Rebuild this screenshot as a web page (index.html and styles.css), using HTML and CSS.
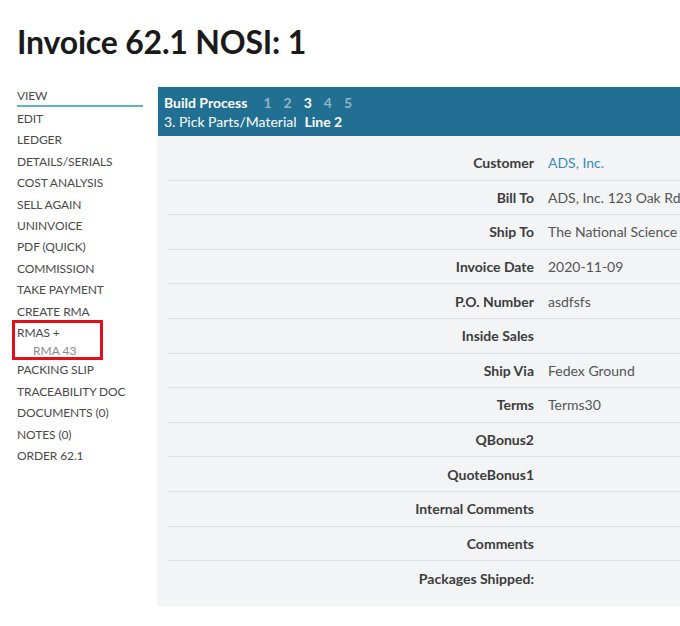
FILE: index.html
```html
<!DOCTYPE html>
<html>
<head>
<meta charset="utf-8">
<link rel="stylesheet" href="styles.css">
</head>
<body>
<div class="page">
  <h1 class="title">Invoice 62.1 NOSI: 1</h1>
  <div class="layout">
    <nav class="sidenav">
      <a class="nav-item active">VIEW</a>
      <a class="nav-item">EDIT</a>
      <a class="nav-item">LEDGER</a>
      <a class="nav-item">DETAILS/SERIALS</a>
      <a class="nav-item">COST ANALYSIS</a>
      <a class="nav-item">SELL AGAIN</a>
      <a class="nav-item">UNINVOICE</a>
      <a class="nav-item">PDF (QUICK)</a>
      <a class="nav-item">COMMISSION</a>
      <a class="nav-item">TAKE PAYMENT</a>
      <a class="nav-item">CREATE RMA</a>
      <div class="nav-group highlighted">
        <a class="nav-item">RMAS +</a>
        <a class="nav-sub">RMA 43</a>
      </div>
      <a class="nav-item">PACKING SLIP</a>
      <a class="nav-item">TRACEABILITY DOC</a>
      <a class="nav-item">DOCUMENTS (0)</a>
      <a class="nav-item">NOTES (0)</a>
      <a class="nav-item">ORDER 62.1</a>
    </nav>
    <section class="panel">
      <header class="panel-head">
        <div class="head-line">
          <span class="head-strong">Build Process</span>
          <span class="steps">
            <span class="step">1</span>
            <span class="step">2</span>
            <span class="step current">3</span>
            <span class="step">4</span>
            <span class="step">5</span>
          </span>
        </div>
        <div class="head-line">
          <span>3. Pick Parts/Material</span>
          <span class="head-strong line-label">Line 2</span>
        </div>
      </header>
      <div class="panel-body">
        <div class="row"><div class="label">Customer</div><div class="value link">ADS, Inc.</div></div>
        <div class="row"><div class="label">Bill To</div><div class="value">ADS, Inc. 123 Oak Rd.</div></div>
        <div class="row"><div class="label">Ship To</div><div class="value">The National Science Foundation</div></div>
        <div class="row"><div class="label">Invoice Date</div><div class="value">2020-11-09</div></div>
        <div class="row"><div class="label">P.O. Number</div><div class="value">asdfsfs</div></div>
        <div class="row"><div class="label">Inside Sales</div><div class="value"></div></div>
        <div class="row"><div class="label">Ship Via</div><div class="value">Fedex Ground</div></div>
        <div class="row"><div class="label">Terms</div><div class="value">Terms30</div></div>
        <div class="row"><div class="label">QBonus2</div><div class="value"></div></div>
        <div class="row"><div class="label">QuoteBonus1</div><div class="value"></div></div>
        <div class="row"><div class="label">Internal Comments</div><div class="value"></div></div>
        <div class="row"><div class="label">Comments</div><div class="value"></div></div>
        <div class="row last"><div class="label">Packages Shipped:</div><div class="value"></div></div>
      </div>
    </section>
  </div>
</div>
</body>
</html>
```

FILE: styles.css
```css
html, body {
  margin: 0;
  padding: 0;
  background: #ffffff;
  overflow: hidden;
}

body {
  font-family: "Source Sans Pro", "Lato", "Liberation Sans", sans-serif;
  color: #444;
}

.page {
  padding: 0 0 0 17px;
  width: 800px;
}

.title {
  margin: 0;
  padding-top: 22px;
  height: 80px;
  box-sizing: border-box;
  font-size: 32px;
  line-height: 40px;
  font-weight: 700;
  color: #1a1a1a;
  letter-spacing: -0.2px;
}

.layout {
  display: flex;
  align-items: flex-start;
}

.sidenav {
  width: 126px;
  flex: none;
  display: flex;
  flex-direction: column;
  padding-top: 6px;
}

.nav-item {
  display: block;
  font-size: 12px;
  line-height: 21.4px;
  color: #4a4a4a;
  text-transform: uppercase;
  letter-spacing: -0.1px;
}

.nav-item.active {
  border-bottom: 2px solid #5fb3c0;
  line-height: 18px;
  padding-top: 1px;
  margin-bottom: 1px;
}

.nav-group {
  position: relative;
}

.nav-group.highlighted::after {
  content: "";
  position: absolute;
  left: -5px;
  top: -2px;
  width: 85px;
  height: 34px;
  border: 3px solid #e3101b;
  pointer-events: none;
}

.nav-sub {
  display: block;
  font-size: 12px;
  line-height: 16px;
  padding-left: 16px;
  color: #8a8a8a;
}

.panel {
  margin-left: 15px;
  margin-top: 7px;
  width: 640px;
  flex: none;
  background: #f2f4f5;
  box-shadow: 0 0 2px rgba(0, 0, 0, 0.12);
}

.panel-head {
  background: #216f92;
  color: #ffffff;
  padding: 6px 6px 5px;
  height: 49px;
  box-sizing: border-box;
  font-size: 14px;
}

.head-line {
  line-height: 19px;
  display: flex;
  gap: 6px;
}

.head-strong {
  font-weight: 700;
}

.steps {
  display: flex;
  gap: 12px;
  margin-left: 10px;
  font-weight: 700;
}

.step {
  color: #8fb4c5;
}

.step.current {
  color: #ffffff;
}

.line-label {
  margin-left: 2px;
}

.panel-body {
  padding: 10px 0 10px 10px;
}

.row {
  display: grid;
  grid-template-columns: 366px 1fr;
  column-gap: 14px;
  height: 34.6px;
  align-items: center;
  border-bottom: 1px solid #dde1e3;
  box-sizing: border-box;
  font-size: 14px;
}

.row.last {
  border-bottom: none;
}

.label {
  text-align: right;
  font-weight: 700;
  color: #3c3c3c;
}

.value {
  color: #555;
  white-space: nowrap;
}

.value.link {
  color: #3a8bbd;
}
```
